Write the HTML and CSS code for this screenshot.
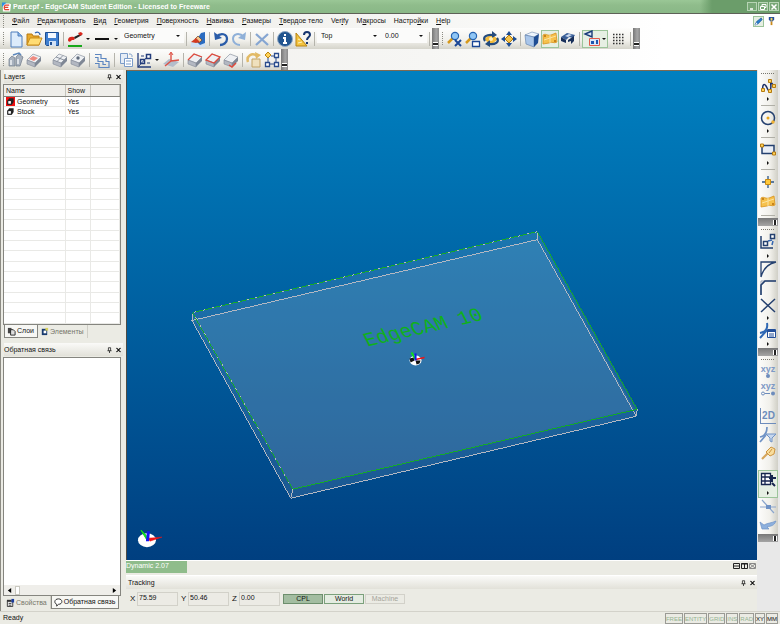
FILE: index.html
```html
<!DOCTYPE html>
<html lang="ru">
<head>
<meta charset="utf-8">
<title>Part.epf - EdgeCAM Student Edition</title>
<link rel="stylesheet" href="styles.css">
</head>
<body>
<svg class="defs" aria-hidden="true">
  <defs>
    <symbol id="slab" viewBox="0 0 18 18"><path d="M2 9 8 3l8 3-6 6z" fill="#eef0f3" stroke="#8b93a1" stroke-width=".7"/><path d="M2 9l8 3v4l-8-3z" fill="#b3b8c2" stroke="#7f8795" stroke-width=".6"/><path d="M10 12l6-6v4l-6 6z" fill="#7f8795"/></symbol>
    <symbol id="gold" viewBox="0 0 18 18"><path d="M2 5c3-2 4 1 8 0l5-2 1 9c-3 2-5-1-8 1l-6 1z" fill="#f6c14c" stroke="#d8921c" stroke-width=".8"/><path d="M3 10l12-4M9 5v8" stroke="#fbe3a0"/><circle cx="4" cy="6" r="1" fill="#b86f0c"/><circle cx="14" cy="11" r="1" fill="#b86f0c"/></symbol>
    <symbol id="layer" viewBox="0 0 10 10"><path d="M3.500 1.500h5v4l-2 3h-5v-4z" fill="#222"/><path d="M2 4h4v4H2z" fill="#fff" stroke="#111"/></symbol>
    <symbol id="pin" viewBox="0 0 6 8"><path d="M1.500 1h3v4M1.500 1v4M0 5h6M3 5v3" fill="none" stroke="#111"/></symbol>
    <symbol id="cross" viewBox="0 0 6 6"><path d="M.5.5l5 5m0-5l-5 5" stroke="#111" stroke-width="1.300"/></symbol>
    <symbol id="lens" viewBox="0 0 18 18"><path d="M7 8l-5 5" stroke="#d79a1c" stroke-width="2.500"/><circle cx="9" cy="6" r="3.600" fill="#8fc6f5" stroke="#2563b0" stroke-width="1.200"/></symbol>
  </defs>
</svg>

<header class="titlebar">
  <svg class="appicon" viewBox="0 0 10 10"><path d="M1 1h7l2 1-1 8H1z" fill="#fff"/><path d="M8 3H4C2 3 2 8 4 8h4M3 5.500h4" fill="none" stroke="#e2442f" stroke-width="1.300"/><path d="M0 0h5L0 5z" fill="#2f8fe0"/></svg>
  <h1>Part.epf - EdgeCAM Student Edition - Licensed to Freeware</h1>
  <div class="winbtns">
    <button aria-label="Minimize"><svg viewBox="0 0 8 8"><path d="M2 6h3" stroke="#fff" stroke-width="1.500"/></svg></button>
    <button aria-label="Restore"><svg viewBox="0 0 8 8"><path d="M3 3V1.500h4v3H5.500M1.500 3.500h4v3h-4z" fill="none" stroke="#fff"/></svg></button>
    <button aria-label="Close"><svg viewBox="0 0 8 8"><path d="M1.500 1.500l5 5m0-5l-5 5" stroke="#fff" stroke-width="1.500"/></svg></button>
  </div>
</header>

<nav class="menubar">
  <i class="grip"></i>
  <a href="#"><u>Ф</u>айл</a><a href="#"><u>Р</u>едактировать</a><a href="#"><u>В</u>ид</a><a href="#"><u>Г</u>еометрия</a><a href="#"><u>П</u>оверхность</a><a href="#"><u>Н</u>авивка</a><a href="#"><u>Р</u>азмеры</a><a href="#"><u>Т</u>вердое тело</a><a href="#">Ver<u>i</u>fy</a><a href="#">М<u>а</u>кросы</a><a href="#">Настро<u>й</u>ки</a><a href="#"><u>H</u>elp</a>
  <div class="modes">
    <button class="on" aria-label="Design mode"><svg viewBox="0 0 10 10"><path d="M1 9l2-4 5-4 1 2-5 5z" fill="#2b7fd0" stroke="#124a8c" stroke-width=".7"/><path d="M1 9l2-3 1 2z" fill="#fff"/></svg></button>
    <button aria-label="Manufacture mode"><svg viewBox="0 0 10 10"><path d="M2 0h6v3L6 5H4L2 3z" fill="#244f9c"/><path d="M4 1h2v3H4z" fill="#f4d35a"/><path d="M4 5h2v4H4z" fill="#c98a1c"/></svg></button>
  </div>
</nav>

<div class="toolrow">
  <div class="toolbar">
    <i class="grip"></i>
    <button aria-label="New"><svg viewBox="0 0 18 18"><path d="M4 2h7l4 4v11H4z" fill="#dcebfb" stroke="#4f7fbd"/><path d="M11 2v4h4" fill="#8bb4e6" stroke="#4f7fbd"/></svg></button>
    <button aria-label="Open"><svg viewBox="0 0 18 18"><path d="M2 15V4h5l1 2h6v9z" fill="#e9a92b" stroke="#b87a10"/><path d="M2 15l3-7h12l-3 7z" fill="#ffdc73" stroke="#c98d1b"/><path d="M10 3c3-2 5 0 5 2" fill="none" stroke="#2e63b0" stroke-width="1.300"/></svg></button>
    <button aria-label="Save"><svg viewBox="0 0 18 18"><path d="M2.500 2.500h13v13h-12l-1-1z" fill="#3f7fd0" stroke="#1e4f93"/><path d="M5 3h8v5H5z" fill="#f5f9ff"/><path d="M6 11h7v5H6z" fill="#d3e2f5"/><path d="M7 12h2v3H7z" fill="#1e4f93"/></svg></button>
    <i class="sep"></i>
    <button aria-label="Colour"><svg viewBox="0 0 18 18"><path d="M2 10c0-3 3-4 6-3l1 2c-2 2-3 0-4 2-1 1-3 1-3-1z" fill="#d9261c"/><path d="M8 7l6-3 2 1-7 4z" fill="#222"/><path d="M12 3l3-1 2 2-3 2z" fill="#d9261c"/><path d="M2 16h14" stroke="#17a81a" stroke-width="2"/></svg></button>
    <button class="drop" aria-label="Colour list"></button>
    <button class="wide" aria-label="Line style"><svg viewBox="0 0 18 18"><path d="M2 9h14" stroke="#111" stroke-width="2"/></svg></button>
    <button class="drop" aria-label="Line style list"></button>
    <span class="combo"><select aria-label="Layer"><option>Geometry</option></select></span>
    <i class="sep"></i>
    <button aria-label="Clear"><svg viewBox="0 0 18 18"><path d="M2 12h14v5H2z" fill="#cfe0f3"/><path d="M16 2v11l-5 2-4-4 5-8z" fill="#2b6cc0"/><path d="M9 6l4 4-3 3-4-4z" fill="#f1c48b" stroke="#6b3e1c" stroke-width=".7"/><path d="M7 8l4 4-4 1-5-1z" fill="#d23a20"/></svg></button>
    <i class="sep"></i>
    <button aria-label="Undo"><svg viewBox="0 0 18 18"><path d="M4 7c5-5 11-3 11 2 0 4-4 6-7 6" fill="none" stroke="#2a5ca8" stroke-width="2.300"/><path d="M2 2l1 8 7-2z" fill="#2a5ca8"/></svg></button>
    <button aria-label="Redo"><svg viewBox="0 0 18 18"><path d="M14 7C9 2 3 4 3 9c0 4 4 6 7 6" fill="none" stroke="#8fb0d8" stroke-width="2"/><path d="M16 2l-1 8-7-2z" fill="#8fb0d8"/></svg></button>
    <i class="sep"></i>
    <button aria-label="Delete"><svg viewBox="0 0 18 18"><path d="M3 4l12 11M15 4L3 15" stroke="#86a6d2" stroke-width="2.300"/></svg></button>
    <i class="sep"></i>
    <button aria-label="Information"><svg viewBox="0 0 18 18"><circle cx="9" cy="9" r="7.500" fill="#22558f" stroke="#8fa8c4"/><path d="M9 4v2M7 8h2v5m-2 0h4" fill="none" stroke="#fff" stroke-width="2"/></svg></button>
    <button aria-label="Help"><svg viewBox="0 0 18 18"><path d="M2 3v13h11z" fill="#f3c33e" stroke="#b98412"/><path d="M4 13l4-1M4 9l2 1" stroke="#fff3c0"/><path d="M10 5c0-4 6-4 6 0 0 2-3 2-3 5m0 2v2" fill="none" stroke="#17356e" stroke-width="2"/></svg></button>
    <i class="sep"></i>
    <span class="combo"><select aria-label="View"><option>Top</option></select></span>
    <span class="combo narrow"><select aria-label="Level"><option>0.00</option></select></span>
    <i class="sep"></i>
    <button class="grab" aria-label="Toolbar options"></button>
  </div>
  <div class="toolbar">
    <i class="grip"></i>
    <button aria-label="Zoom extents"><svg viewBox="0 0 18 18"><use href="#lens"/><path d="M9 10l6 6m0-6l-6 6" stroke="#1b4796" stroke-width="2"/></svg></button>
    <button aria-label="Zoom window"><svg viewBox="0 0 18 18"><use href="#lens"/><path d="M8.500 11.500h7v5h-7z" fill="#fff" stroke="#1b4796" stroke-width="1.300"/></svg></button>
    <button aria-label="Rotate"><svg viewBox="0 0 18 18"><path d="M2 9l7-5 7 5-7 6z" fill="#f3bb3b"/><path d="M3 11c-3-4 2-7 8-6M15 8c3 4-2 7-8 6" fill="none" stroke="#244b7c" stroke-width="2.200"/><path d="M10 1l5 4-5 3zM8 10l-5 4 5 3z" fill="#244b7c"/><circle cx="9" cy="9" r="2" fill="#fff0b8"/></svg></button>
    <button aria-label="Pan"><svg viewBox="0 0 18 18"><path d="M9 1l3 4H6zM9 17l3-4H6zM1 9l4-3v6zM17 9l-4-3v6z" fill="#1d4d94"/><path d="M9 5l4 4-4 4-4-4z" fill="#f5c44c" stroke="#a9760e"/></svg></button>
    <i class="sep"></i>
    <button aria-label="Isometric"><svg viewBox="0 0 18 18"><path d="M2 5l7-3 7 2-5 3z" fill="#eef5fd" stroke="#6b87ad" stroke-width=".6"/><path d="M2 5l9 2v10l-8-3z" fill="#a9c6ea" stroke="#5b7aa6" stroke-width=".6"/><path d="M11 7l5-3-1 9-4 4z" fill="#1f4d93"/></svg></button>
    <button class="on" aria-label="Solids"><svg viewBox="0 0 18 18"><use href="#gold"/></svg></button>
    <button aria-label="Clamp"><svg viewBox="0 0 18 18"><path d="M2 7l6-4 8 2-2 3-4-1-3 3z" fill="#3a5f98"/><path d="M2 7l5 3v3l-5-2zM9 10l6-4v5l-3 3v-3l-3 1z" fill="#182f5a"/><path d="M6 6l4-2 3 1-4 2z" fill="#cfdcf0"/></svg></button>
    <i class="sep"></i>
    <div class="split on">
      <button aria-label="Snapshot"><svg viewBox="0 0 18 18"><path d="M9 1L2 4l7 3z" fill="#dbe6f5" stroke="#183a78" stroke-width="1.400"/><path d="M6.500 8.500h10v7h-10z" fill="#d9e7fa" stroke="#e25a4a"/><path d="M8 11h3v3H8zM13 10h2v4h-2z" fill="#1d57b0"/></svg></button>
      <button class="drop" aria-label="Snapshot list"></button>
    </div>
    <button class="wide" aria-label="Grid"><svg viewBox="0 0 18 18"><path d="M4 4.500h11M4 7.500h11M4 10.500h11M4 13.500h11" stroke="#333" stroke-width="1.500" stroke-dasharray="1.500 1.500"/></svg></button>
    <i class="sep"></i>
    <button class="grab" aria-label="Toolbar options"></button>
  </div>
</div>

<div class="toolrow">
  <div class="toolbar">
    <i class="grip"></i>
    <button aria-label="Find"><svg viewBox="0 0 18 18"><path d="M2 15V8l3-3 3 2v8zM9 15V6l3-3 4 3-3 9z" fill="#a8b1be" stroke="#717b8a" stroke-width=".7"/><path d="M6 4l6-2 2 2" fill="none" stroke="#5c87bd" stroke-width="1.500"/><path d="M4 9v5M11 8v5" stroke="#eef1f5" stroke-width="1.500"/></svg></button>
    <button aria-label="Erase solid"><svg viewBox="0 0 18 18"><use href="#slab"/><path d="M4 8l4-3 5 2-4 3z" fill="#ee8b80"/></svg></button>
    <i class="gap"></i>
    <button aria-label="Surface"><svg viewBox="0 0 18 18"><use href="#slab"/><path d="M5 6l8 3M12 4.500l-6 6" stroke="#6f7785" stroke-width=".8"/></svg></button>
    <button aria-label="Surface point"><svg viewBox="0 0 18 18"><use href="#slab"/><circle cx="9" cy="7" r="1.700" fill="#5f6b7d"/></svg></button>
    <i class="sep"></i>
    <button class="wide" aria-label="Section"><svg viewBox="0 0 18 18"><path d="M2 3.500h6v4h5v3h3v6H6v-4H2" fill="none" stroke="#5d86c0" stroke-width="1.200"/><path d="M2 6.500h3v4h5v3h3" fill="none" stroke="#5d86c0" stroke-width="1.200"/></svg></button>
    <i class="sep"></i>
    <button aria-label="Copy"><svg viewBox="0 0 18 18"><path d="M3.500 2.500h7v10h-7z" fill="#e6edf6" stroke="#7b9cc9"/><path d="M7.500 7.500h8v8h-8z" fill="#fff" stroke="#7b9cc9"/><path d="M12 3c3 0 3 1 3 3M9 10h5m-5 3h5" fill="none" stroke="#7b9cc9"/></svg></button>
    <button aria-label="Axes"><svg viewBox="0 0 18 18"><path d="M3 2v14h13" fill="none" stroke="#233c7b" stroke-width="1.300"/><path d="M5.500 8.500h4v4h-4zM11.500 3.500h4v4h-4z" fill="#fff" stroke="#233c7b" stroke-width="1.500"/><path d="M3 16l9-10M6 5h3M12 12h3" stroke="#233c7b"/></svg></button>
    <button class="drop" aria-label="Axes list"></button>
    <button class="wide" aria-label="Plane"><svg viewBox="0 0 18 18"><path d="M1 13l6-5 10 3-6 5z" fill="#b3bdcb"/><path d="M9 10V2M9 10l-6 5M9 10l8-1" stroke="#dd5145" stroke-width="1.400"/><path d="M7 4l2-3 2 3" fill="none" stroke="#dd5145"/></svg></button>
    <i class="sep"></i>
    <button aria-label="Edge loop"><svg viewBox="0 0 18 18"><use href="#slab"/><path d="M2 9l6-6 8 3" fill="none" stroke="#e0493c" stroke-width="1.300"/></svg></button>
    <button aria-label="Face loop"><svg viewBox="0 0 18 18"><use href="#slab"/><path d="M2 9l6-6 8 3-6 6z" fill="none" stroke="#e0493c" stroke-width="1.300"/></svg></button>
    <button aria-label="Vertex"><svg viewBox="0 0 18 18"><use href="#slab"/><path d="M7 14l3 2 4-4" fill="none" stroke="#e0493c" stroke-width="1.500"/></svg></button>
    <i class="sep"></i>
    <button aria-label="Update"><svg viewBox="0 0 18 18"><path d="M3 11c-2-6 4-10 9-6" fill="none" stroke="#e2ba66" stroke-width="2.500"/><path d="M10 1l6 3-5 4z" fill="#e2ba66"/><path d="M7 8h8v8H7z" fill="#efe0bd" stroke="#c2a366"/></svg></button>
    <button aria-label="Tree"><svg viewBox="0 0 18 18"><path d="M5 7v4m3-6h3m2 2v4m-7 2h5" stroke="#294b8d"/><path d="M5 1l3 3-3 3-3-3z" fill="#ffd257" stroke="#bb8412"/><path d="M11.500 2.500h4v4h-4zM2.500 11.500h4v4h-4zM11.500 11.500h4v4h-4z" fill="#fff" stroke="#294b8d" stroke-width="1.300"/></svg></button>
    <button class="grab" aria-label="Toolbar options"></button>
  </div>
</div>

<main class="workspace">
  <aside class="side">
    <section class="panel upper">
      <h2>Layers <span><svg viewBox="0 0 6 8"><use href="#pin"/></svg><svg viewBox="0 0 6 6"><use href="#cross"/></svg></span></h2>
      <div class="sheet">
        <table>
          <thead><tr><th class="name">Name</th><th class="show">Show</th><th></th></tr></thead>
          <tbody>
            <tr><td><svg class="red" viewBox="0 0 10 10"><use href="#layer"/></svg>Geometry</td><td>Yes</td><td></td></tr>
            <tr><td><svg viewBox="0 0 10 10"><use href="#layer"/></svg>Stock</td><td>Yes</td><td></td></tr>
            <tr><td></td><td></td><td></td></tr><tr><td></td><td></td><td></td></tr><tr><td></td><td></td><td></td></tr><tr><td></td><td></td><td></td></tr>
            <tr><td></td><td></td><td></td></tr><tr><td></td><td></td><td></td></tr><tr><td></td><td></td><td></td></tr><tr><td></td><td></td><td></td></tr>
            <tr><td></td><td></td><td></td></tr><tr><td></td><td></td><td></td></tr><tr><td></td><td></td><td></td></tr><tr><td></td><td></td><td></td></tr>
            <tr><td></td><td></td><td></td></tr><tr><td></td><td></td><td></td></tr><tr><td></td><td></td><td></td></tr><tr><td></td><td></td><td></td></tr>
            <tr><td></td><td></td><td></td></tr><tr><td></td><td></td><td></td></tr><tr><td></td><td></td><td></td></tr><tr><td></td><td></td><td></td></tr>
          </tbody>
        </table>
      </div>
      <div class="tabs">
        <button class="active"><svg viewBox="0 0 10 10"><path d="M1 1h4v6H1z" fill="#444"/><path d="M4 3h3l2 2v4H4z" fill="#ddd" stroke="#222"/></svg>Слои</button>
        <button><svg viewBox="0 0 10 10"><path d="M2 2h6v7H2z" fill="#173a6e"/><path d="M4 4h3v3H4z" fill="#fff"/><path d="M6 1h3v3H6z" fill="#d7d05b"/></svg>Элементы</button>
      </div>
    </section>
    <section class="panel lower">
      <h2>Обратная связь <span><svg viewBox="0 0 6 8"><use href="#pin"/></svg><svg viewBox="0 0 6 6"><use href="#cross"/></svg></span></h2>
      <div class="sheet feedback">
        <div class="hscroll"><button aria-label="Scroll left"><svg viewBox="0 0 6 8"><path d="M5 1v6L1 4z"/></svg></button><i></i><button aria-label="Scroll right"><svg viewBox="0 0 6 8"><path d="M1 1v6l4-3z"/></svg></button></div>
      </div>
      <div class="tabs">
        <button><svg viewBox="0 0 10 10"><path d="M1.500 3.500h6v6h-6z" fill="#eee" stroke="#333"/><path d="M1 2h5v2H1z" fill="#333"/><path d="M6 1h3v4H6z" fill="#1c3c9c"/><path d="M3 6h3M3 8h3" stroke="#333"/></svg>Свойства</button>
        <button class="active"><svg viewBox="0 0 10 10"><path d="M3 7C0 6 0 1 5 1s5 6 0 6L3 9z" fill="#fff" stroke="#222"/></svg>Обратная связь</button>
      </div>
    </section>
  </aside>

  <div class="center">
    <div class="viewport">
      <svg viewBox="126 70 631 490" preserveAspectRatio="xMidYMid slice" role="img" aria-label="Part view">
        <path d="M192 312L537 231 637 409 636 416 290 498 191 320z" fill="#a8b4cc" fill-opacity=".16"/>
        <path d="M194 319L537 239 634 409 292 489z" fill="#e0e4e4" fill-opacity=".1"/>
        <g class="wire">
          <path d="M191 320L537 239 636 416 290 498zM192 312l-1 8M537 231v8M637 409l-1 7M292 489l-2 9" stroke="#b4b8c2"/>
          <path d="M192 312L537 231 637 409 292 489z" stroke="#14ab28"/>
          <path d="M537 231L192 312 292 489" stroke="#b4b8c2" stroke-dasharray="2 7"/>
        </g>
        <text class="engraved" transform="translate(367 346) rotate(-13) skewX(14)">EdgeCAM 10</text>
        <g>
          <ellipse cx="415" cy="360" rx="6" ry="5" fill="#fff"/>
          <path d="M409 358l4-1 1 3-4 2zM415 360l5 0-1 3-3 1z" fill="#111"/>
          <path d="M415 359l-4-7" stroke="#0fdc1e" stroke-width="2"/><path d="M415 359l9-2" stroke="#f01414" stroke-width="1.500"/><path d="M415 360v-7" stroke="#1414f0" stroke-width="2"/>
        </g>
        <ellipse cx="146" cy="540" rx="9" ry="7" fill="#fff"/>
        <path d="M146 540l-6-10 5 5z" fill="#0fdc1e" stroke="#0fdc1e"/><path d="M147 538l14-1-12 4z" fill="#f01414" stroke="#f01414" stroke-width=".5"/><path d="M145 541l1-10h3l-1 10z" fill="#1414f0"/>
      </svg>
    </div>
    <div class="mdibar">
      <span class="dynamic">Dynamic 2.07</span>
      <span class="mdi"><svg viewBox="0 0 7 6"><path d="M.5.5h6v5h-6zM1 3h5" fill="none" stroke="#222"/></svg><svg viewBox="0 0 7 6"><path d="M.5.5h6v5h-6zM3.500 1v4M0 1h7" fill="none" stroke="#222"/></svg><svg viewBox="0 0 7 6"><path d="M.5.500h6v5h-6zM1 1l5 4m0-4L1 5" fill="none" stroke="#888"/></svg></span>
    </div>
    <section class="tracking">
      <h2>Tracking <span><svg viewBox="0 0 6 8"><use href="#pin"/></svg><svg viewBox="0 0 6 6"><use href="#cross"/></svg></span></h2>
      <div class="coords">
        <label for="cx">X</label><input id="cx" value="75.59">
        <label for="cy">Y</label><input id="cy" value="50.46">
        <label for="cz">Z</label><input id="cz" value="0.00">
        <button class="pressed">CPL</button><button class="world">World</button><button disabled>Machine</button>
      </div>
    </section>
  </div>

  <div class="rail">
    <div class="vbar">
      <i class="vgrip"></i>
      <button class="t" aria-label="Polyline"><svg viewBox="0 0 18 18"><path d="M4 13C3 8 5 6 7 9s2 6 4 4 0-6 1-9M11 4l4 5" fill="none" stroke="#1c2f66" stroke-width="1.500"/><path d="M2.500 11.500h3v3h-3zM9.500 2.500h3v3h-3zM9.500 12.500h3v3h-3zM13.500 7.500h3v3h-3z" fill="#ffd35c" stroke="#b57b10"/></svg></button>
      <button class="arr" aria-label="More lines"></button><i class="vsep"></i>
      <button class="t" aria-label="Circle"><svg viewBox="0 0 18 18"><circle cx="9" cy="9" r="6.500" fill="none" stroke="#24406f" stroke-width="1.500"/><circle cx="9" cy="9" r="1.500" fill="#e8a41c"/><circle cx="14" cy="13" r="1.700" fill="#f0b030"/></svg></button>
      <button class="arr" aria-label="More circles"></button><i class="vsep"></i>
      <button class="t" aria-label="Rectangle"><svg viewBox="0 0 18 18"><path d="M3 4.500h12v8H3z" fill="#e9eef6" stroke="#24406f" stroke-width="1.500"/><path d="M1.500 3h3v3h-3zM13.500 11h3v3h-3z" fill="#ffd35c" stroke="#b57b10"/></svg></button>
      <button class="arr" aria-label="More rectangles"></button><i class="vsep"></i>
      <button class="t" aria-label="Point"><svg viewBox="0 0 18 18"><path d="M9 3v12M3 9h12" stroke="#2d5687" stroke-width="1.300"/><path d="M6.500 6.500h5v5h-5z" fill="#ffc93c" stroke="#c78a12"/></svg></button>
      <button class="t" aria-label="Surface"><svg viewBox="0 0 18 18"><use href="#gold"/></svg></button>
      <i class="vsep"></i><button class="vgrab" aria-label="Options"></button>
      <i class="vgrip"></i>
      <button class="t" aria-label="Transform"><svg viewBox="0 0 18 18"><path d="M2 3v12h12" fill="none" stroke="#24406f" stroke-width="1.500"/><path d="M11.500 1.500h4v4h-4zM4.500 8.500h4v4h-4z" fill="#fff" stroke="#24406f" stroke-width="1.500"/><path d="M9 8l4-1M13 12l1-4" stroke="#3465b0" stroke-width="1.500"/></svg></button>
      <button class="arr tall" aria-label="More transforms"></button>
      <button aria-label="Fillet"><svg viewBox="0 0 18 18"><path d="M2 17V2h15M2 17C4 9 8 4 17 2" fill="none" stroke="#24406f" stroke-width="1.300"/></svg></button>
      <button aria-label="Corner"><svg viewBox="0 0 18 18"><path d="M2 17V3h15" fill="none" stroke="#9aa5b8"/><path d="M2 17V7l4-4h11" fill="none" stroke="#24406f" stroke-width="1.600"/></svg></button>
      <button aria-label="Trim"><svg viewBox="0 0 18 18"><path d="M2 3l14 13M16 3L2 16" stroke="#24406f" stroke-width="1.500"/></svg></button>
      <button class="arr tall" aria-label="More trims"></button>
      <button aria-label="Properties"><svg viewBox="0 0 18 18"><path d="M1 11C7 10 9 6 8 1M1 16l7-8" fill="none" stroke="#2f68b4" stroke-width="2"/><path d="M8.500 7.500h8v8h-8z" fill="#fff" stroke="#24509a"/><path d="M8 8h9v2H8z" fill="#24509a"/><path d="M10 12h5m-5 2h5" stroke="#24509a"/></svg></button>
      <button class="arr tall" aria-label="More properties"></button>
      <button class="vgrab" aria-label="Options"></button>
      <i class="vgrip"></i>
      <button class="txt">xyz<i class="dot"></i></button>
      <button class="txt">xyz<svg viewBox="0 0 16 5"><circle cx="3" cy="2.500" r="1.500" fill="none" stroke="#6d8cbc"/><path d="M5 2.500h5" stroke="#6d8cbc"/><circle cx="13" cy="2.500" r="2" fill="#6d8cbc"/></svg></button>
      <i class="vgap"></i>
      <button class="twod">2D</button>
      <button aria-label="Filter"><svg viewBox="0 0 18 18"><path d="M1 11C6 10 8 6 8 1M1 16l6-7" fill="none" stroke="#6f92c5" stroke-width="1.700"/><path d="M7 8h10l-4 4v4l-2-1v-3z" fill="#c6d7ee" stroke="#6f92c5"/></svg></button>
      <button aria-label="Pick"><svg viewBox="0 0 18 18"><path d="M3 15l6-6" stroke="#d5a55c" stroke-width="2.200"/><path d="M7 8l5-5 4 2-1 5-4 2z" fill="#f8dd9d" stroke="#cd9440"/><path d="M10 9l3-4" stroke="#cd9440"/></svg></button>
      <i class="vgap"></i>
      <div class="vsplit on">
        <button aria-label="Add view"><svg viewBox="0 0 18 18"><path d="M2.500 2.500h9v11h-9zM6 2v12M2 6h9M2 10h9" fill="#fff" stroke="#17264f" stroke-width="1.300"/><path d="M13 4v7M10 7h7M13 12l3 3" stroke="#17264f" stroke-width="2"/></svg></button>
        <button class="arr tall" aria-label="More views"></button>
      </div>
      <button aria-label="Intersect"><svg viewBox="0 0 18 18"><path d="M1 9h16M3 2l12 13" stroke="#8ba6cd" stroke-width="1.200"/><path d="M7 7h5v4H7z" fill="#6f92c5"/></svg></button>
      <button aria-label="Return"><svg viewBox="0 0 18 18"><path d="M1 6l2 7h7l-2-2c4-1 7-1 9-6-4 2-9 2-12 4z" fill="#8db0dd" stroke="#6f92c5" stroke-width=".7"/></svg></button>
      <button class="vgrab" aria-label="Options"></button>
    </div>
  </div>
</main>

<footer class="status">
  <span class="ready">Ready</span>
  <span class="cell">FREE</span><span class="cell">ENTITY</span><span class="cell">GRID</span><span class="cell">INS</span><span class="cell">RAD</span><span class="cell lit">XY</span><span class="cell lit">MM</span>
</footer>
</body>
</html>
```
FILE: styles.css
```css
* { box-sizing: border-box; }

body {
  margin: 0;
  height: 100vh;
  display: flex;
  flex-direction: column;
  overflow: hidden;
  background: #ebebe4;
  color: #111;
  font: 7px/10px "Liberation Sans", Arial, sans-serif;
}

button, input, select { font: inherit; color: inherit; margin: 0; padding: 0; border: 0; background: none; }
button { display: flex; align-items: center; justify-content: center; }
h1, h2 { margin: 0; font: inherit; }
a { color: inherit; text-decoration: none; }
svg { display: block; flex: none; }
.defs { width: 0; height: 0; position: absolute; }

/* Title bar */
.titlebar {
  flex: none;
  height: 14px;
  display: flex;
  align-items: center;
  gap: 2px;
  padding-left: 2px;
  border-bottom: 1px solid #5d6157;
  background: linear-gradient(90deg, transparent calc(100% - 80px), #6b9d6a calc(100% - 68px)), linear-gradient(#9ac796, #8fbc8b 40%, #8ab887);
  color: #fff;
}
.titlebar h1 { flex: 1; font-weight: bold; white-space: nowrap; }
.appicon { width: 9px; height: 10px; }
.winbtns { display: flex; gap: 1px; padding-right: 1px; }
.winbtns button { width: 10px; height: 9px; border: 1px solid #b7d4b5; background: #78a877; }
.winbtns svg { width: 8px; height: 8px; }

/* Menu */
.menubar {
  flex: none;
  height: 14px;
  display: flex;
  align-items: center;
  gap: 8px;
  background: linear-gradient(90deg, #ecebe6, #f6f6f4 55%, #fff 85%);
  white-space: nowrap;
}
.menubar .grip { margin-right: -3px; }
.modes { margin-left: auto; display: flex; gap: 2px; padding-right: 3px; }
.modes button { width: 11px; height: 11px; }
.modes svg { width: 9px; height: 9px; }
.on { border: 1px solid #9cc49a; background: #e6efe3; }

/* Toolbars */
.toolrow { flex: none; display: flex; height: 21px; background: linear-gradient(90deg, #f0efeb, #f6f6f4 55%, #fff 85%); }
.toolbar {
  display: flex;
  align-items: center;
  height: 21px;
  background: linear-gradient(#fdfdfc, #f1f0eb 60%, #d5d4cb);
}
.toolbar button { width: 18px; height: 18px; flex: none; }
.toolbar svg { width: 18px; height: 18px; }
.toolbar .wide { width: 20px; }
.grip { flex: none; width: 7px; height: 13px; border-left: 3px solid transparent; background: repeating-linear-gradient(#8c8b83 0 1px, transparent 1px 2px) 0 0 / 1px 100% no-repeat; }
.sep { flex: none; width: 5px; height: 14px; background: linear-gradient(#b5b4ac, #b5b4ac) center / 1px 100% no-repeat; }
.gap { width: 8px; }
.toolbar .drop { width: 8px; }
.drop::after, .combo::after { content: ""; border: 2px solid transparent; border-top-color: #111; border-bottom: 0; }
.toolbar .grab {
  width: 7px;
  height: 21px;
  align-items: flex-end;
  padding-bottom: 3px;
  background: linear-gradient(90deg, #777, #a5a5a5 60%, #8a8a8a);
}
.grab::after { content: ""; width: 5px; height: 4px; background: linear-gradient(#fff 1px, #222 1px 3px, #fff 3px); }
.split { display: flex; width: 26px; height: 18px; align-items: center; }
.split .drop { width: 6px; }
.combo { display: grid; width: 64px; height: 16px; align-self: flex-start; align-items: center; }
.combo.narrow { width: 46px; }
.combo select, .combo::after { grid-area: 1 / 1; }
.combo::after { justify-self: end; margin-right: 4px; pointer-events: none; }
.combo select { appearance: none; height: 14px; padding-left: 4px; background: #fbfbfa; }

/* Workspace */
.workspace { flex: 1; min-height: 0; display: flex; }
.side { flex: none; width: 123px; display: flex; flex-direction: column; padding-left: 3px; border-left: 1px solid #8d8c84; }
.panel { flex: 1; min-height: 0; display: flex; flex-direction: column; }
.upper { flex-basis: 2px; }
.lower { padding-top: 3px; }
.panel h2, .tracking h2 {
  flex: none;
  height: 13px;
  display: flex;
  align-items: center;
  justify-content: space-between;
  padding: 0 2px 0 0;
  background: linear-gradient(#fafaf8, #e2e1d9);
}
h2 span { display: flex; gap: 4px; align-items: center; }
h2 svg { width: 5px; height: 6px; }
.sheet { flex: 1; min-height: 0; margin: 1px 2px 0 -1px; border: 1px solid #85857f; background: #fff; }
table { width: 100%; height: 100%; border-collapse: collapse; table-layout: fixed; line-height: 9px; }
th, td { padding: 0 0 0 2px; height: 10px; text-align: left; font-weight: normal; border-right: 1px solid #e9e9e6; border-bottom: 1px solid #e9e9e6; white-space: nowrap; }
th { height: 11px; background: #efeeea; border-right-color: #c4c3bb; border-bottom-color: #85857f; }
.name { width: 61px; }
.show { width: 25px; }
td svg { display: inline-block; width: 9px; height: 9px; margin-right: 2px; vertical-align: top; }
.red { background: #f01010; }

.tabs { flex: none; display: flex; height: 15px; align-items: flex-start; white-space: nowrap; }
.tabs button { height: 13px; padding: 0 3px 0 2px; gap: 1px; color: #77766a; border-right: 1px solid #cfcec6; }
.tabs .active { color: #111; background: #f7f7f4; border: 1px solid #85857f; border-top: 0; }
.tabs svg { width: 9px; height: 9px; }
.feedback { display: flex; flex-direction: column; justify-content: flex-end; }
.hscroll { display: flex; align-items: center; height: 10px; background: #efeeea; }
.hscroll button { width: 11px; height: 10px; }
.hscroll svg { width: 5px; height: 7px; }
.hscroll i { width: 5px; height: 9px; margin-right: auto; background: #fff; border: 1px solid #c9c8c0; }

.center { flex: 1; min-width: 0; display: flex; flex-direction: column; padding-left: 3px; }
.viewport {
  flex: 1;
  min-height: 0;
  border-top: 1px solid #7d6a52;
  border-left: 1px solid #4d4b45;
  background: linear-gradient(#0080c0, #003f80);
}
.viewport svg { width: 100%; height: 100%; }
.wire { fill: none; shape-rendering: crispEdges; }
.engraved { font: 20px "Liberation Mono", monospace; fill: #10b01c; }
.mdibar { flex: none; display: flex; justify-content: space-between; height: 15px; border-top: 1px solid #fff; }
.dynamic { width: 61px; height: 12px; line-height: 9px; background: #8fbc8b; color: #fff; }
.mdi { display: flex; gap: 1px; padding: 2px 1px 0 0; }
.mdi svg { width: 7px; height: 6px; }
.tracking { flex: none; height: 36px; border-top: 1px solid #fff; }
.tracking h2 { padding-left: 2px; }
.coords { display: flex; align-items: center; padding: 3px 0 0 4px; }
.coords label { width: 7px; font-size: 8px; }
.coords input { width: 41px; height: 14px; margin-right: 3px; padding: 0 0 3px 1px; border: 1px solid #d2d1c9; background: #ecebe5; }
.coords button { width: 40px; height: 10px; margin-right: 1px; border: 1px solid #d2d1c9; }
.coords .pressed { border-color: #6d8f6d; background: #a3bda1; }
.coords .world { border: 1px solid #7ba07b; background: #e4ece1; }
.coords button:disabled { color: #a5a49b; }

/* Right-hand tools */
.rail { flex: none; width: 23px; padding: 0 2px 0 1px; background: #e8e8e8; }
.vbar { display: flex; flex-direction: column; background: linear-gradient(90deg, #fdfdfc, #f1f0eb 60%, #d0cfc6); }
.vbar button { width: 20px; height: 18px; flex: none; }
.vbar svg { width: 18px; height: 18px; }
.vbar .t { height: 20px; }
.vbar .arr { height: 6px; }
.vbar .tall { height: 8px; }
.arr::after { content: ""; border: 2px solid transparent; border-left-color: #111; border-right: 0; }
.vgrip { height: 6px; background: repeating-linear-gradient(90deg, #77766e 0 1px, transparent 1px 2px) center / 14px 1px no-repeat; }
.vsep { height: 6px; background: linear-gradient(#b0afa7, #b0afa7) center / 14px 1px no-repeat; }
.vgap { height: 8px; }
.vbar .vgrab { height: 8px; justify-content: flex-end; padding-right: 1px; background: linear-gradient(#777, #a5a5a5); }
.vgrab::after { content: ""; width: 4px; height: 5px; background: linear-gradient(90deg, #fff 1px, #222 1px 3px, #fff 3px); }
.vsplit { display: flex; flex-direction: column; height: 28px; }
.vsplit button { align-self: center; }
.vbar .txt { flex-direction: column; font-size: 9px; font-weight: bold; line-height: 9px; color: #7d99c6; }
.vbar .txt svg { width: 16px; height: 5px; }
.dot { width: 4px; height: 4px; border-radius: 2px; background: #6d8cbc; }
.vbar .twod { width: 16px; height: 16px; margin: 2px; font-size: 10px; font-weight: bold; color: #6d8cbc; border-left: 1px solid #6d8cbc; border-bottom: 1px solid #6d8cbc; }

/* Status bar */
.status { flex: none; display: flex; align-items: center; gap: 1px; height: 13px; padding: 0 2px 0 3px; border-top: 1px solid #d3d2ca; }
.ready { flex: 1; }
.cell { height: 11px; padding: 0; font-size: 6px; line-height: 10px; border: 1px solid #9b9b95; color: #93b391; }
.lit { color: #111; }
```
